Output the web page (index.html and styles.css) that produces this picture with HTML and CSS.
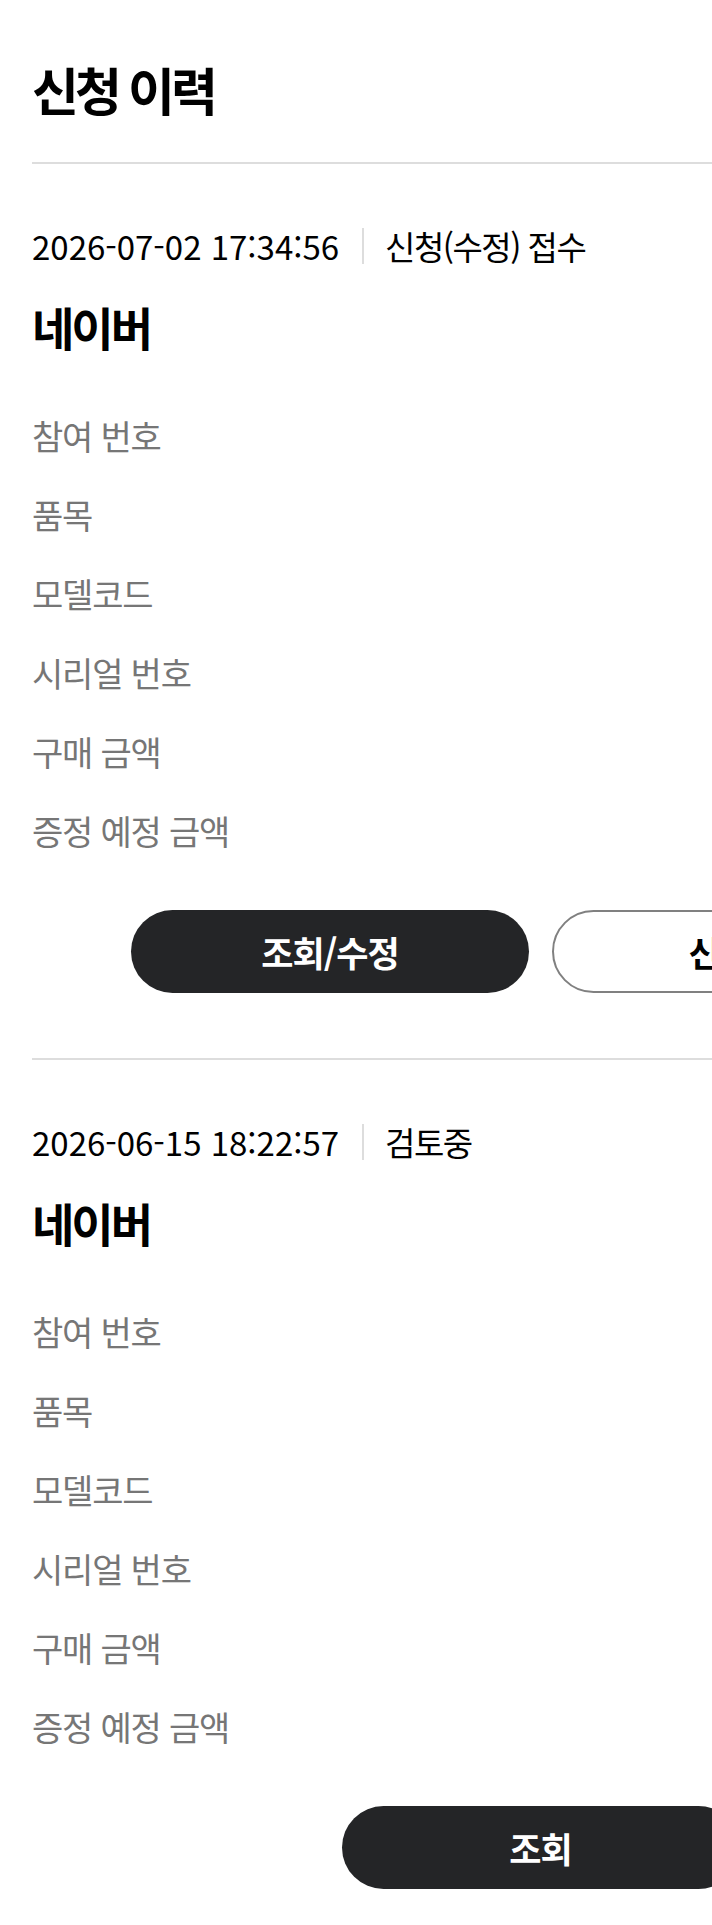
FILE: index.html
```html
<!DOCTYPE html>
<html lang="ko">
<head>
	<meta charset="utf-8">
	<title>신청 이력</title>
	<link rel="stylesheet" href="styles.css">
</head>
<body>
	<div class="page">
		<h2 class="page-title">신청 이력</h2>

		<ul class="history">
			<li class="record">
				<div class="record-head">
					<span class="record-date">2026-07-02 17:34:56</span>
					<span class="record-status">신청(수정) 접수</span>
				</div>
				<h3 class="record-name">네이버</h3>
				<dl class="record-info">
					<div class="info-row"><dt>참여 번호</dt><dd></dd></div>
					<div class="info-row"><dt>품목</dt><dd></dd></div>
					<div class="info-row"><dt>모델코드</dt><dd></dd></div>
					<div class="info-row"><dt>시리얼 번호</dt><dd></dd></div>
					<div class="info-row"><dt>구매 금액</dt><dd></dd></div>
					<div class="info-row"><dt>증정 예정 금액</dt><dd></dd></div>
				</dl>
				<div class="record-actions">
					<button class="btn btn-dark" type="button">조회/수정</button>
					<button class="btn btn-line" type="button">신청취소</button>
				</div>
			</li>

			<li class="record">
				<div class="record-head">
					<span class="record-date">2026-06-15 18:22:57</span>
					<span class="record-status">검토중</span>
				</div>
				<h3 class="record-name">네이버</h3>
				<dl class="record-info">
					<div class="info-row"><dt>참여 번호</dt><dd></dd></div>
					<div class="info-row"><dt>품목</dt><dd></dd></div>
					<div class="info-row"><dt>모델코드</dt><dd></dd></div>
					<div class="info-row"><dt>시리얼 번호</dt><dd></dd></div>
					<div class="info-row"><dt>구매 금액</dt><dd></dd></div>
					<div class="info-row"><dt>증정 예정 금액</dt><dd></dd></div>
				</dl>
				<div class="record-actions">
					<button class="btn btn-dark" type="button">조회</button>
				</div>
			</li>
		</ul>
	</div>
</body>
</html>
```

FILE: styles.css
```css
html {
	overflow-x: hidden;
}
body {
	margin: 0;
	font-family: "Noto Sans CJK KR", "Noto Sans", sans-serif;
	color: #000;
	background-color: #fff;
}
.page {
	box-sizing: border-box;
	width: 1081px;
	padding: 0 32px;
}
.page-title {
	margin: 0 0 42px;
	padding-top: 58px;
	font-size: 51px;
	line-height: 62px;
	font-weight: bold;
	letter-spacing: -4px;
}
.history {
	margin: 0;
	padding: 0;
	list-style: none;
}
.record {
	padding: 60px 0 65px;
	border-top: 2px solid #dddddd;
}
.record-head {
	display: flex;
	align-items: center;
	height: 44px;
	font-size: 33px;
}
.record-date {
	margin-right: 23px;
}
.record-status {
	display: flex;
	align-items: center;
	letter-spacing: -1.5px;
}
.record-status::before {
	content: "";
	width: 2px;
	height: 36px;
	margin-right: 21px;
	background-color: #dddddd;
}
.record-name {
	margin: 30px 0 0;
	font-size: 46px;
	line-height: 56px;
	font-weight: bold;
	letter-spacing: -3px;
}
.record-info {
	margin: 42px 0 0;
}
.info-row {
	display: flex;
	align-items: center;
	height: 79px;
}
.info-row dt {
	font-size: 34px;
	color: #767676;
	letter-spacing: -1.2px;
}
.info-row dd {
	margin: 0;
}
.record-actions {
	display: flex;
	justify-content: center;
	gap: 23px;
	margin-top: 40px;
}
.btn {
	box-sizing: border-box;
	width: 398px;
	height: 83px;
	padding: 0;
	border-radius: 42px;
	font-family: inherit;
	font-size: 35px;
	font-weight: bold;
	letter-spacing: -1px;
	cursor: pointer;
}
.btn-dark {
	background-color: #242527;
	border: none;
	color: #fff;
}
.btn-line {
	background-color: #fff;
	border: 2px solid #808080;
	color: #000;
}
```
